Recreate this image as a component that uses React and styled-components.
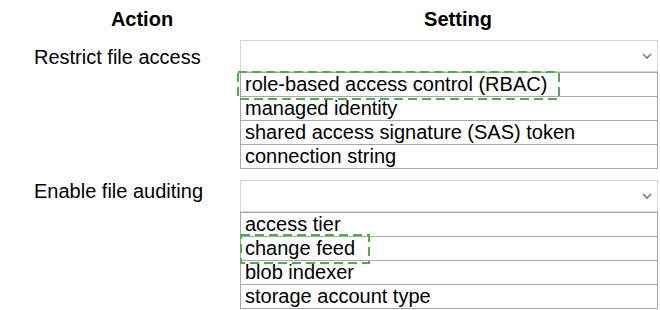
import React from "react";
import styled, { createGlobalStyle } from "styled-components";

const Global = createGlobalStyle`
  html, body { margin: 0; padding: 0; background: #fff; }
  body {
    font-family: "Liberation Sans", Arial, sans-serif;
    font-size: 20px;
    color: #000;
  }
`;

const Page = styled.div`
  width: 660px;
  height: 310px;
  display: flex;
  flex-direction: column;
  gap: 11px;
  overflow: hidden;
`;

const HeaderRow = styled.div`
  display: flex;
  height: 29px;
  padding-top: 8px;
  margin-bottom: -8px;
`;

const HeaderCell = styled.div`
  width: ${(p) => p.$w}px;
  text-align: center;
  font-weight: bold;
  line-height: 23px;
`;

const Section = styled.div`
  display: grid;
  grid-template-columns: 240px 418px;
`;

const Label = styled.div`
  padding-left: 34px;
  padding-top: ${(p) => p.$top}px;
  line-height: 23px;
`;

const Field = styled.div`
  display: flex;
  flex-direction: column;
`;

const Select = styled.div`
  height: 32px;
  box-sizing: border-box;
  border: 1px solid #d6d6d6;
  display: flex;
  align-items: center;
  justify-content: flex-end;
  padding-right: 5px;
`;

const OptionList = styled.div`
  border-left: 1px solid #a8a8a8;
  border-right: 1px solid #a8a8a8;
  border-bottom: 1px solid #a8a8a8;
`;

const Option = styled.div`
  position: relative;
  border-top: 1px solid #a8a8a8;
  line-height: 23px;
  padding-left: 4px;
  white-space: nowrap;
`;

const Highlight = styled.svg`
  position: absolute;
  left: ${(p) => p.$left}px;
  top: ${(p) => p.$top}px;
  overflow: visible;
  pointer-events: none;
`;

function Dashed({ left, top, width, height }) {
  return (
    <Highlight $left={left} $top={top} width={width} height={height}>
      <rect
        x="1"
        y="1"
        width={width - 2}
        height={height - 2}
        fill="none"
        stroke="#50ad4e"
        strokeWidth="2"
        strokeDasharray="9 5"
      />
    </Highlight>
  );
}

const Chevron = () => (
  <svg width="10" height="6" viewBox="0 0 10 6">
    <polyline
      points="1,1 5,5 9,1"
      fill="none"
      stroke="#7d7d7d"
      strokeWidth="1.7"
    />
  </svg>
);

const sections = [
  {
    label: "Restrict file access",
    top: 6,
    options: [
      "role-based access control (RBAC)",
      "managed identity",
      "shared access signature (SAS) token",
      "connection string",
    ],
    hl: { index: 0, left: -4, top: -2, width: 323, height: 29 },
  },
  {
    label: "Enable file auditing",
    top: 0,
    options: ["access tier", "change feed", "blob indexer", "storage account type"],
    hl: { index: 1, left: -1, top: -3, width: 130, height: 30 },
  },
];

export default function App() {
  return (
    <>
      <Global />
      <Page>
        <HeaderRow>
          <HeaderCell $w={284}>Action</HeaderCell>
          <HeaderCell $w={348}>Setting</HeaderCell>
        </HeaderRow>
        {sections.map((s) => (
          <Section key={s.label}>
            <Label $top={s.top}>{s.label}</Label>
            <Field>
              <Select>
                <Chevron />
              </Select>
              <OptionList>
                {s.options.map((o, i) => (
                  <Option key={o}>
                    {o}
                    {s.hl.index === i && (
                      <Dashed
                        left={s.hl.left}
                        top={s.hl.top}
                        width={s.hl.width}
                        height={s.hl.height}
                      />
                    )}
                  </Option>
                ))}
              </OptionList>
            </Field>
          </Section>
        ))}
      </Page>
    </>
  );
}
